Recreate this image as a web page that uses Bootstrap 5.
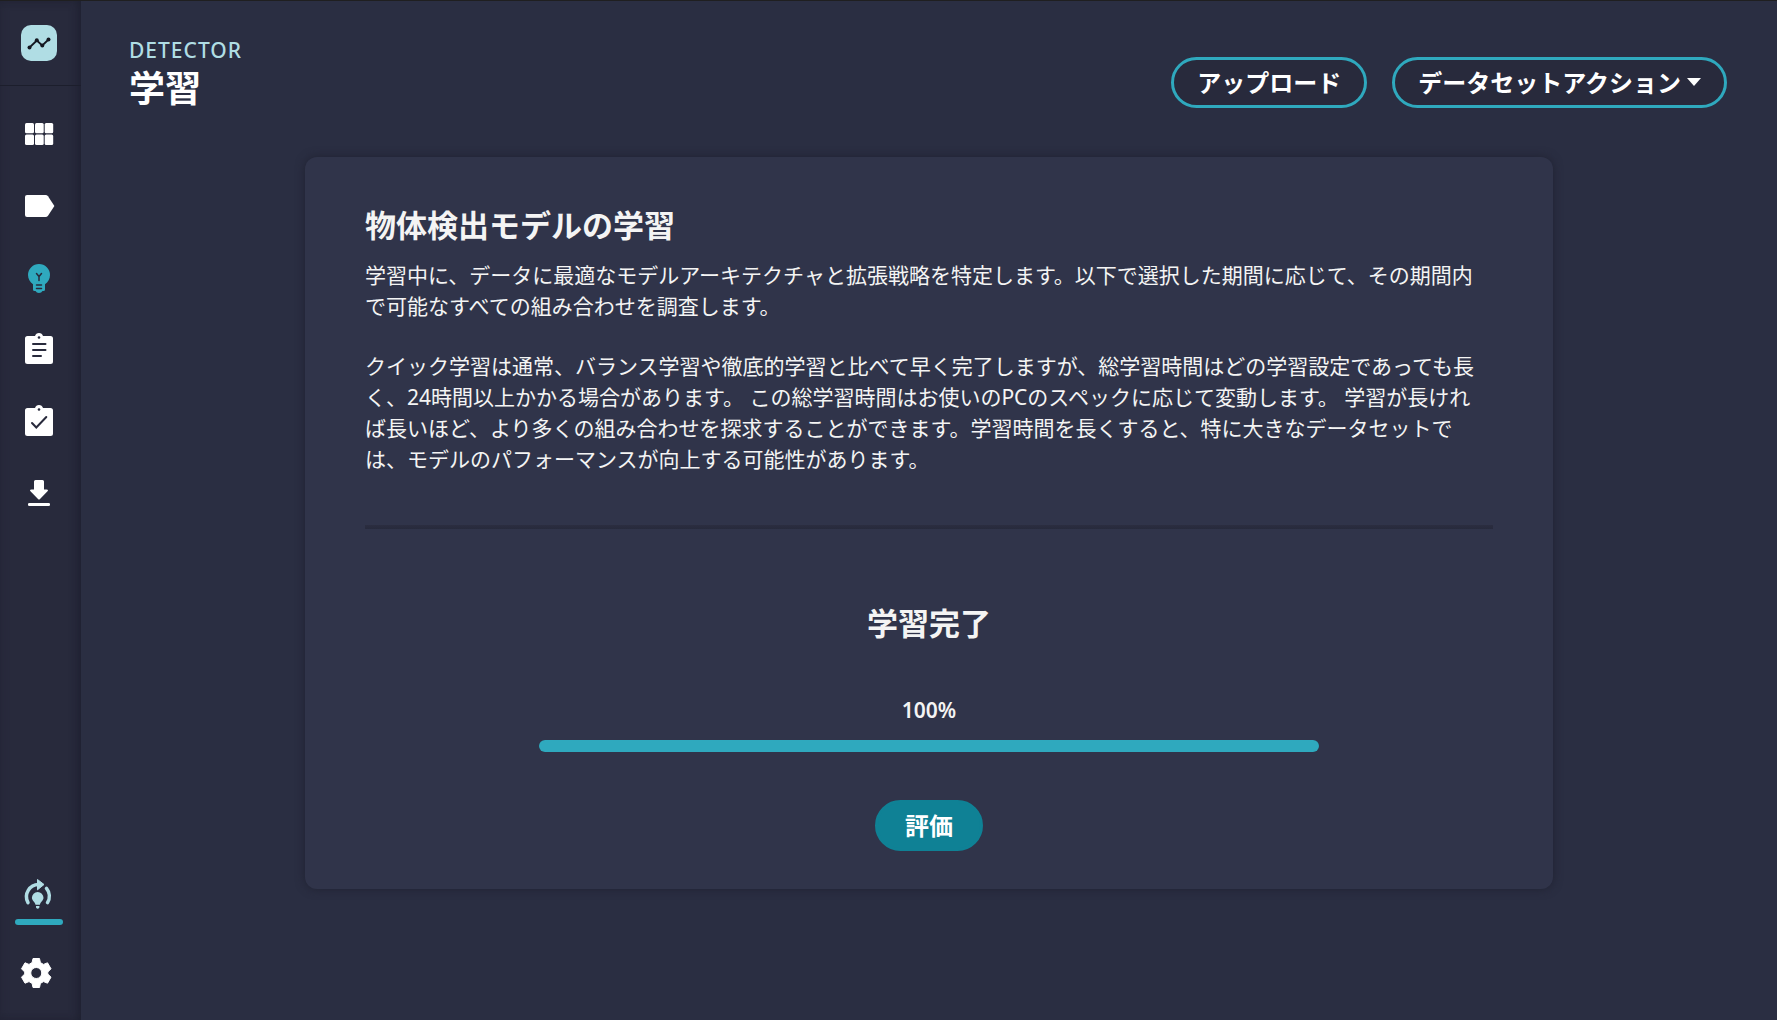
<!DOCTYPE html>
<html lang="ja">
<head>
<meta charset="utf-8">
<meta name="viewport" content="width=device-width, initial-scale=1">
<title>学習 - Detector</title>
<link href="https://cdn.jsdelivr.net/npm/bootstrap@5.3.0/dist/css/bootstrap.min.css" rel="stylesheet">
<style>
  body {
    font-family: "Noto Sans", "Noto Sans CJK JP", sans-serif;
    background: #2a2e42;
    color: #f4f4f4;
  }
  .app-shell { border-top: 1px solid #1f1f20; }
  .side-rail {
    width: 81px;
    background: #282a3c;
    box-shadow: inset -6px 0 10px -4px #1e2030, inset 0 0 8px #242637;
    color: #fff;
  }
  .side-rail svg { display: block; width: 36px; height: 36px; fill: currentColor; }
  .side-rail a { color: inherit; }
  .rail-brand { padding: 24px 21px; border-bottom: 1px solid #1c1e2c; }
  .rail-nav { padding: 30px 21px; gap: 36px; }
  .rail-foot { padding: 0 15px 29px; gap: 30px; }
  .side-rail .tone-active { color: #2fa9be; }
  .side-rail .tone-pale { color: #b0dde4; }
  .rail-meter { height: 6px; width: 48px; margin-top: 7px; background: #2fa9be; }
  .cut { stroke: #282a3c; fill: none; stroke-width: 2; stroke-linecap: round; }
  .cut-fine { stroke-width: 1.5; }
  .page-head { padding: 35px 50px 43px 48px; }
  .project-name { font-size: 21px; line-height: 28px; font-weight: 500; letter-spacing: 1px; color: #b0dde4; }
  .page-title { font-size: 36px; line-height: 50px; font-weight: 700; color: #fff; }
  .pill {
    --bs-btn-color: #fff;
    --bs-btn-hover-color: #fff;
    --bs-btn-font-weight: 700;
    --bs-btn-font-size: 24px;
    --bs-btn-line-height: 39px;
    --bs-btn-border-width: 3px;
    --bs-btn-padding-x: 23px;
    --bs-btn-padding-y: 3px;
    --bs-btn-bg: #282a3c;
    --bs-btn-border-color: #2fa9be;
    --bs-btn-hover-bg: #30344a;
    --bs-btn-hover-border-color: #2fa9be;
  }
  .pill-solid {
    --bs-btn-bg: #0f8195;
    --bs-btn-border-color: #0f8195;
    --bs-btn-hover-bg: #2fa9be;
    --bs-btn-padding-x: 27px;
  }
  .pill.dropdown-toggle::after { border-width: 8px 7px 0; margin-left: 6px; vertical-align: 6px; }
  .head-actions { gap: 25px; padding-bottom: 6px; }
  .train-panel {
    max-width: 1248px;
    padding: 48px 60px 38px;
    background: #30344a;
    border-radius: 12px;
    box-shadow: 0 0 10px #202232;
  }
  .panel-title { font-size: 31px; line-height: 40px; font-weight: 700; margin-bottom: 15px; }
  .panel-text { font-size: 21px; line-height: 31px; max-width: 1120px; }
  .panel-text p { margin-bottom: 29px; }
  .panel-rule { height: 4px; margin: 50px 0 74px; border: 0; opacity: 1; background: linear-gradient(#2b2d40, #272a3c); }
  .status-title { font-size: 31px; line-height: 40px; font-weight: 700; margin-bottom: 52px; }
  .percent { font-size: 21px; line-height: 30px; font-weight: 600; margin-bottom: 15px; }
  .train-progress { --bs-progress-height: 12px; --bs-progress-border-radius: 6px; --bs-progress-bar-bg: #2fa9be; --bs-progress-bg: #282a3c; max-width: 780px; margin-bottom: 48px; }
</style>
</head>
<body>
<div class="app-shell d-flex min-vh-100">
  <aside class="side-rail d-flex flex-column flex-shrink-0">
    <div class="rail-brand">
      <a href="#" aria-label="ホーム">
        <svg viewBox="0 0 36 36"><rect width="36" height="36" rx="10" fill="#b0dde4"/><path d="M8.500 22.500 15.800 15.500 21.300 20.500 27.500 14.500" fill="none" stroke="#141720" stroke-width="1.800"/><g fill="#141720"><circle cx="8.500" cy="22.500" r="2"/><circle cx="15.800" cy="15.200" r="2"/><circle cx="21.300" cy="20.500" r="2"/><circle cx="27.500" cy="14.500" r="2"/></g></svg>
      </a>
    </div>
    <nav class="rail-nav d-flex flex-column" aria-label="メイン">
      <a href="#" aria-label="データセット"><svg viewBox="0 0 36 36"><rect x="4" y="7" width="9" height="10.300" rx="1.500"/><rect x="14" y="7" width="8.700" height="10.300" rx="1.500"/><rect x="23.700" y="7" width="8.500" height="10.300" rx="1.500"/><rect x="4" y="18.600" width="9" height="10.300" rx="1.500"/><rect x="14" y="18.600" width="8.700" height="10.300" rx="1.500"/><rect x="23.700" y="18.600" width="8.500" height="10.300" rx="1.500"/></svg></a>
      <a href="#" aria-label="ラベル"><svg viewBox="0 0 36 36"><path d="M6 7H24.500Q26 7 27 8.300L33.400 18 27 27.700Q26 29 24.500 29H6Q4 29 4 27V9Q4 7 6 7Z"/></svg></a>
      <a href="#" class="tone-active" aria-label="学習" aria-current="page"><svg viewBox="0 0 36 36"><path d="M18 4A11 11 0 0 1 29 15C29 19 27 22 24 24.300V29.500Q24 31 22.500 31H21.500Q20.500 33 18 33T14.500 31H13.500Q12 31 12 29.500V24.300C9 22 7 19 7 15A11 11 0 0 1 18 4Z"/><path class="cut cut-fine" d="M15.500 13.500 18 16.500 20.500 13.500M18 16.500V20.500M15.500 25H20.500M15.500 28.500H20.500"/></svg></a>
      <a href="#" aria-label="評価"><svg viewBox="0 0 36 36"><path d="M6.500 4H14A4.200 4.200 0 0 1 22 4H29.500Q32 4 32 6.500V29.500Q32 32 29.500 32H6.500Q4 32 4 29.500V6.500Q4 4 6.500 4Z"/><circle cx="18" cy="5.500" r="1.300" fill="#282a3c"/><path class="cut" d="M12 12H24.500M12 18H24.500M12 24H20"/></svg></a>
      <a href="#" aria-label="テスト"><svg viewBox="0 0 36 36"><path d="M6.500 4H14A4.200 4.200 0 0 1 22 4H29.500Q32 4 32 6.500V29.500Q32 32 29.500 32H6.500Q4 32 4 29.500V6.500Q4 4 6.500 4Z"/><circle cx="18" cy="5.500" r="1.300" fill="#282a3c"/><path class="cut" d="M11 19 15.300 23.500 25.300 13"/></svg></a>
      <a href="#" aria-label="エクスポート"><svg viewBox="0 0 36 36"><path d="M14.500 4H21.500Q23 4 23 5.500V13.500H25.500Q28 13.500 26.300 15.500L19 23Q18 24 17 23L9.700 15.500Q8 13.500 10.500 13.500H13V5.500Q13 4 14.500 4Z"/><rect x="7" y="27" width="22" height="3" rx="1.300"/></svg></a>
    </nav>
    <div class="rail-foot d-flex flex-column mt-auto">
      <div>
        <a href="#" class="tone-pale d-block ps-1" aria-label="学習の進捗"><svg viewBox="0 0 36 36"><g fill="none" stroke="currentColor" stroke-width="3.500" stroke-linecap="round"><path d="M9 26.600A12.200 12.200 0 0 1 20 8.500"/><path d="M27.500 12.400A12.200 12.200 0 0 1 28.500 26.600"/></g><path d="M18.500 3.500 25 8.500 18.500 13.800Z" stroke="currentColor" stroke-linejoin="round"/><path d="M18.700 16A5.800 5.800 0 0 1 24.500 21.800C24.500 24.500 21.500 26 20.900 28.800H16.500C15.900 26 12.900 24.500 12.900 21.800A5.800 5.800 0 0 1 18.700 16ZM17 30H20.400V31.500Q18.700 34 17 31.500Z"/></svg></a>
        <div class="rail-meter rounded-pill"></div>
      </div>
      <a href="#" class="d-block ps-1" aria-label="設定"><svg viewBox="0 0 36 36"><path fill-rule="evenodd" d="M14 3.500H20.500L21.400 7.600 24.500 9.400 28.500 7.800 32 13.800 28.800 17V19L32 22.200 28.500 28.200 24.500 26.600 21.400 28.400 20.500 32.500H14L13.100 28.400 10 26.600 6 28.200 2.500 22.200 5.700 19V17L2.500 13.800 6 7.800 10 9.400 13.100 7.600ZM17.250 12.500A5.500 5.500 0 1 0 17.250 23.500 5.500 5.500 0 1 0 17.250 12.500Z" stroke="currentColor" stroke-width="1" stroke-linejoin="round"/></svg></a>
    </div>
  </aside>

  <main class="flex-grow-1">
    <header class="page-head d-flex justify-content-between align-items-end">
      <div>
        <div class="project-name">DETECTOR</div>
        <h1 class="page-title mb-0">学習</h1>
      </div>
      <div class="head-actions d-flex">
        <button type="button" class="btn pill rounded-pill">アップロード</button>
        <div class="dropdown">
          <button type="button" class="btn pill rounded-pill dropdown-toggle" data-bs-toggle="dropdown" aria-expanded="false">データセットアクション</button>
        </div>
      </div>
    </header>

    <section class="train-panel mx-auto">
      <h2 class="panel-title">物体検出モデルの学習</h2>
      <div class="panel-text">
        <p>学習中に、データに最適なモデルアーキテクチャと拡張戦略を特定します。以下で選択した期間に応じて、その期間内で可能なすべての組み合わせを調査します。</p>
        <p class="mb-0">クイック学習は通常、バランス学習や徹底的学習と比べて早く完了しますが、総学習時間はどの学習設定であっても長く、24時間以上かかる場合があります。 この総学習時間はお使いのPCのスペックに応じて変動します。 学習が長ければ長いほど、より多くの組み合わせを探求することができます。学習時間を長くすると、特に大きなデータセットでは、モデルのパフォーマンスが向上する可能性があります。</p>
      </div>
      <hr class="panel-rule">
      <div class="d-flex flex-column align-items-center">
        <h2 class="status-title">学習完了</h2>
        <div class="percent" id="percent">100%</div>
        <div class="progress train-progress w-100" role="progressbar" aria-labelledby="percent" aria-valuenow="100" aria-valuemin="0" aria-valuemax="100">
          <div class="progress-bar" style="width: 100%"></div>
        </div>
        <button type="button" class="btn pill pill-solid rounded-pill">評価</button>
      </div>
    </section>
  </main>
</div>
<script src="https://cdn.jsdelivr.net/npm/bootstrap@5.3.0/dist/js/bootstrap.bundle.min.js"></script>
</body>
</html>
